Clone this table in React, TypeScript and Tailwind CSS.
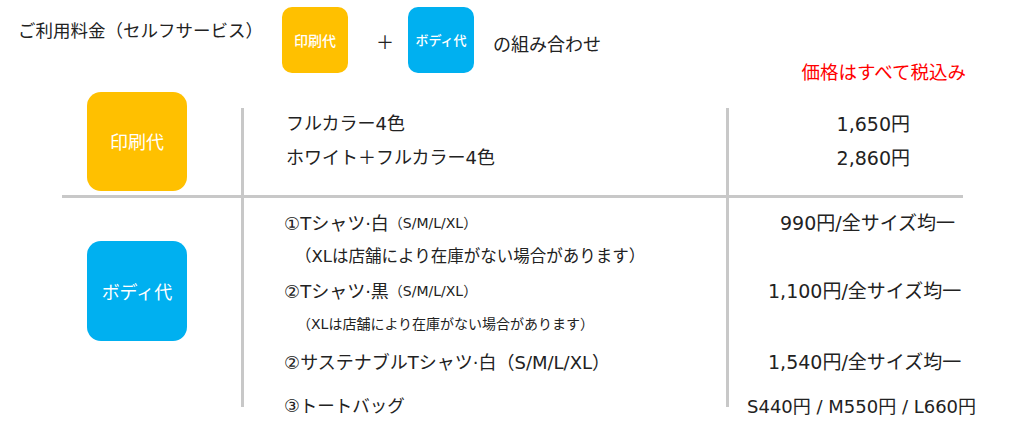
const font = { fontFamily: '"DejaVu Sans", "Noto Sans CJK JP", sans-serif' };

const Line = ({ h }: { h: string }) => <div className={`w-[3px] shrink-0 bg-[#c8c8c8] ${h}`} />;

export default function App() {
  return (
    <div
      className="w-[1024px] h-[427px] overflow-hidden bg-white text-[#222]"
      style={{ fontFamily: '"Noto Sans CJK JP", sans-serif' }}
    >
      {/* header */}
      <div className="flex items-start h-[92px]">
        <div className="w-[282px] shrink-0 pl-[18px] mt-[18px] text-[17.5px] leading-[24px] whitespace-nowrap">
          ご利用料金（セルフサービス）
        </div>
        <div className="mt-[7px] w-[66px] h-[66px] rounded-[10px] bg-[#ffc000] flex items-center justify-center text-white text-[14px] font-medium">
          印刷代
        </div>
        <div className="w-[60px] mt-[29px] pl-[28px] text-[18px] leading-[24px]">＋</div>
        <div className="mt-[7px] w-[66px] h-[66px] rounded-[10px] bg-[#00b0f0] flex items-center justify-center text-white text-[13px] font-medium">
          ボディ代
        </div>
        <div className="ml-[19px] mt-[30px] text-[18px] leading-[26px] whitespace-nowrap">の組み合わせ</div>
        <div className="ml-auto mr-[58px] mt-[58px] text-[18.5px] leading-[26px] text-[#ff0000] whitespace-nowrap">
          価格はすべて税込み
        </div>
      </div>

      {/* table */}
      <div className="ml-[62px] w-[901px]">
        <div className="flex items-start h-[103px]">
          <div className="w-[179px] shrink-0 pl-[25px]">
            <div className="w-[100px] h-[99px] rounded-[14px] bg-[#ffc000] flex items-center justify-center text-white text-[18px]">
              印刷代
            </div>
          </div>
          <div className="mt-[16px]">
            <Line h="h-[87px]" />
          </div>
          <div className="w-[482px] shrink-0 pl-[42px] pt-[15px] text-[18px] leading-[34px]" style={font}>
            <div>フルカラー4色</div>
            <div>ホワイト＋フルカラー4色</div>
          </div>
          <div className="mt-[16px]">
            <Line h="h-[87px]" />
          </div>
          <div className="w-[181px] shrink-0 pt-[15px] text-right text-[19px] leading-[34px]" style={font}>
            <div>1,650円</div>
            <div>2,860円</div>
          </div>
        </div>

        <div className="h-[3px] bg-[#c8c8c8]" />

        <div className="flex items-start">
          <div className="w-[179px] shrink-0 pl-[25px] pt-[43px]">
            <div className="w-[100px] h-[100px] rounded-[14px] bg-[#00b0f0] flex items-center justify-center text-white text-[18px]">
              ボディ代
            </div>
          </div>
          <Line h="h-[209px]" />
          <div className="w-[482px] shrink-0 pl-[40px] pt-[8px] whitespace-nowrap" style={font}>
            <div className="h-[34px] flex items-center text-[18px]">
              ①Tシャツ·白<span className="text-[14px]">（S/M/L/XL）</span>
            </div>
            <div className="h-[34px] flex items-center pl-[11px] text-[16.5px]">（XLは店舗により在庫がない場合があります）</div>
            <div className="h-[34px] flex items-center text-[18px]">
              ②Tシャツ·黒<span className="text-[14px]">（S/M/L/XL）</span>
            </div>
            <div className="h-[32px] flex items-center pl-[13px] text-[14px]">（XLは店舗により在庫がない場合があります）</div>
            <div className="h-[44px] flex items-center text-[18px]">②サステナブルTシャツ·白（S/M/L/XL）</div>
            <div className="h-[44px] flex items-center text-[17.5px]">③トートバッグ</div>
          </div>
          <Line h="h-[209px]" />
          <div className="shrink-0 pt-[8px] whitespace-nowrap" style={font}>
            <div className="h-[34px] flex items-center pl-[51px] text-[19px]">990円/全サイズ均一</div>
            <div className="h-[34px]" />
            <div className="h-[34px] flex items-center pl-[39px] text-[19px]">1,100円/全サイズ均一</div>
            <div className="h-[32px]" />
            <div className="h-[44px] flex items-center pl-[39px] text-[19px]">1,540円/全サイズ均一</div>
            <div className="h-[44px] flex items-center pl-[18px] text-[18px]">S440円 / M550円 / L660円</div>
          </div>
        </div>
      </div>
    </div>
  );
}
